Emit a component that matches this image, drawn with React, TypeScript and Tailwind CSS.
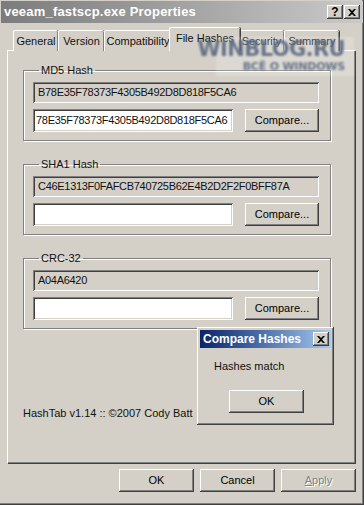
import React from "react";

const raised =
  "shadow-[inset_-1px_-1px_#404040,inset_1px_1px_#ffffff,inset_-2px_-2px_#808080,inset_2px_2px_#d4d0c8]";
const sunken =
  "shadow-[inset_1px_1px_#808080,inset_-1px_-1px_#ffffff,inset_2px_2px_#404040,inset_-2px_-2px_#d4d0c8]";

function Button({ label, className = "", disabled = false }: { label: React.ReactNode; className?: string; disabled?: boolean }) {
  return (
    <div
      className={`flex items-center justify-center bg-[#d4d0c8] ${raised} ${
        disabled ? "text-[#808080] [text-shadow:1px_1px_#ffffff]" : "text-black"
      } ${className}`}
    >
      {label}
    </div>
  );
}

function HashGroup({ title, value, input }: { title: string; value: string; input: string }) {
  return (
    <fieldset className="ml-[15px] w-[308px] h-[77px] border border-[#808080] shadow-[1px_1px_0_#ffffff,inset_1px_1px_0_#ffffff] px-[9px] pt-[5px]">
      <legend className="ml-[6px] px-[2px] leading-[13px]">{title}</legend>
      <div className={`h-[21px] w-[286px] bg-[#d4d0c8] ${sunken} pl-[5px] flex items-center tracking-[-0.3px]`}>{value}</div>
      <div className="mt-[6px] flex">
        <div className={`h-[23px] w-[200px] bg-white ${sunken} pl-[3px] flex items-center overflow-hidden whitespace-nowrap tracking-[-0.3px]`}>
          {input}
        </div>
        <Button label="Compare..." className="ml-[12px] w-[74px] h-[23px]" />
      </div>
    </fieldset>
  );
}

export default function App() {
  const tabs = ["General", "Version", "Compatibility", "File Hashes", "Security", "Summary"];
  const widths = [45, 46, 67, 71, 46, 55];
  return (
    <div className="relative w-[364px] h-[505px] bg-[#d4d0c8] overflow-hidden text-[11px] text-[#111] font-['Liberation_Sans',Arial,sans-serif] shadow-[inset_-1px_-1px_#404040,inset_-2px_-2px_#808080]">
      {/* title bar */}
      <div className="mx-[1px] mt-[1px] h-[22px] flex items-center bg-gradient-to-r from-[#7c7c7c] to-[#cacaca] pl-[3px] pr-[3px]">
        <span className="text-white font-bold text-[13px] tracking-[0.2px] flex-1">veeam_fastscp.exe Properties</span>
        <Button label={<span className="font-bold text-[12px] leading-none">?</span>} className="w-[16px] h-[14px]" />
        <Button
          label={
            <svg width="8" height="7" viewBox="0 0 8 7">
              <path d="M0 0h2l2 2 2-2h2L5 3.5 8 7H6L4 5 2 7H0l3-3.5z" fill="#000" />
            </svg>
          }
          className="ml-[1px] w-[16px] h-[14px]"
        />
      </div>

      {/* tabs */}
      <div className="mt-[5px] ml-[13px] flex items-end h-[23px] relative z-10">
        {tabs.map((t, i) => {
          const sel = i === 3;
          return (
            <div
              key={t}
              style={{ width: widths[i] }}
              className={`flex items-center justify-center bg-[#d4d0c8] border-t border-l border-white rounded-t-[2px] shadow-[inset_-1px_0_#808080,1px_0_#404040] ${
                sel ? "h-[24px] -mx-[2px] pb-[3px] relative z-10 border-b-0" : "h-[21px]"
              }`}
            >
              {t}
            </div>
          );
        })}
      </div>

      {/* panel */}
      <div className="ml-[7px] -mt-[1px] w-[348px] h-[413px] border-t border-l border-white shadow-[inset_-1px_-1px_#808080,1px_1px_#404040] pt-[13px] flex flex-col gap-[17px]">
        <HashGroup title="MD5 Hash" value="B78E35F78373F4305B492D8D818F5CA6" input="78E35F78373F4305B492D8D818F5CA6" />
        <HashGroup title="SHA1 Hash" value="C46E1313F0FAFCB740725B62E4B2D2F2F0BFF87A" input="" />
        <HashGroup title="CRC-32" value="A04A6420" input="" />
        <div className="ml-[15px] mt-[59px] whitespace-nowrap">HashTab v1.14 :: ©2007 Cody Batt</div>
      </div>

      {/* bottom buttons */}
      <div className="mt-[6px] ml-[119px] flex gap-[6px]">
        <Button label="OK" className="w-[75px] h-[23px]" />
        <Button label="Cancel" className="w-[75px] h-[23px]" />
        <Button label={<span><u>A</u>pply</span>} className="w-[75px] h-[23px]" disabled />
      </div>

      {/* watermark */}
      <div className="absolute z-20 left-[216px] top-[37px] w-[138px] h-[39px] bg-white/20 blur-[0.8px] pointer-events-none flex flex-col items-end pr-[9px] font-['DejaVu_Sans',sans-serif] font-bold text-[#5a6880]">
        <span className="text-[21px] leading-[24px] tracking-[-0.6px] opacity-90">WINBLOG.RU</span>
        <span className="text-[11px] leading-[12px] tracking-[-0.2px] opacity-90">ВСЁ О WINDOWS</span>
      </div>

      {/* compare hashes dialog */}
      <div className={`absolute left-[197px] top-[327px] w-[137px] h-[98px] bg-[#d4d0c8] ${raised} p-[3px]`}>
        <div className="h-[18px] flex items-center bg-gradient-to-r from-[#0a246a] to-[#a6caf0] pl-[3px] pr-[2px]">
          <span className="flex-1 text-white font-bold text-[12px]">Compare Hashes</span>
          <Button
            label={
              <svg width="8" height="7" viewBox="0 0 8 7">
                <path d="M0 0h2l2 2 2-2h2L5 3.5 8 7H6L4 5 2 7H0l3-3.5z" fill="#000" />
              </svg>
            }
            className="w-[16px] h-[14px]"
          />
        </div>
        <div className="mt-[10px] ml-[14px]">Hashes match</div>
        <Button label="OK" className="mt-[15px] ml-[29px] w-[75px] h-[23px]" />
      </div>
    </div>
  );
}
